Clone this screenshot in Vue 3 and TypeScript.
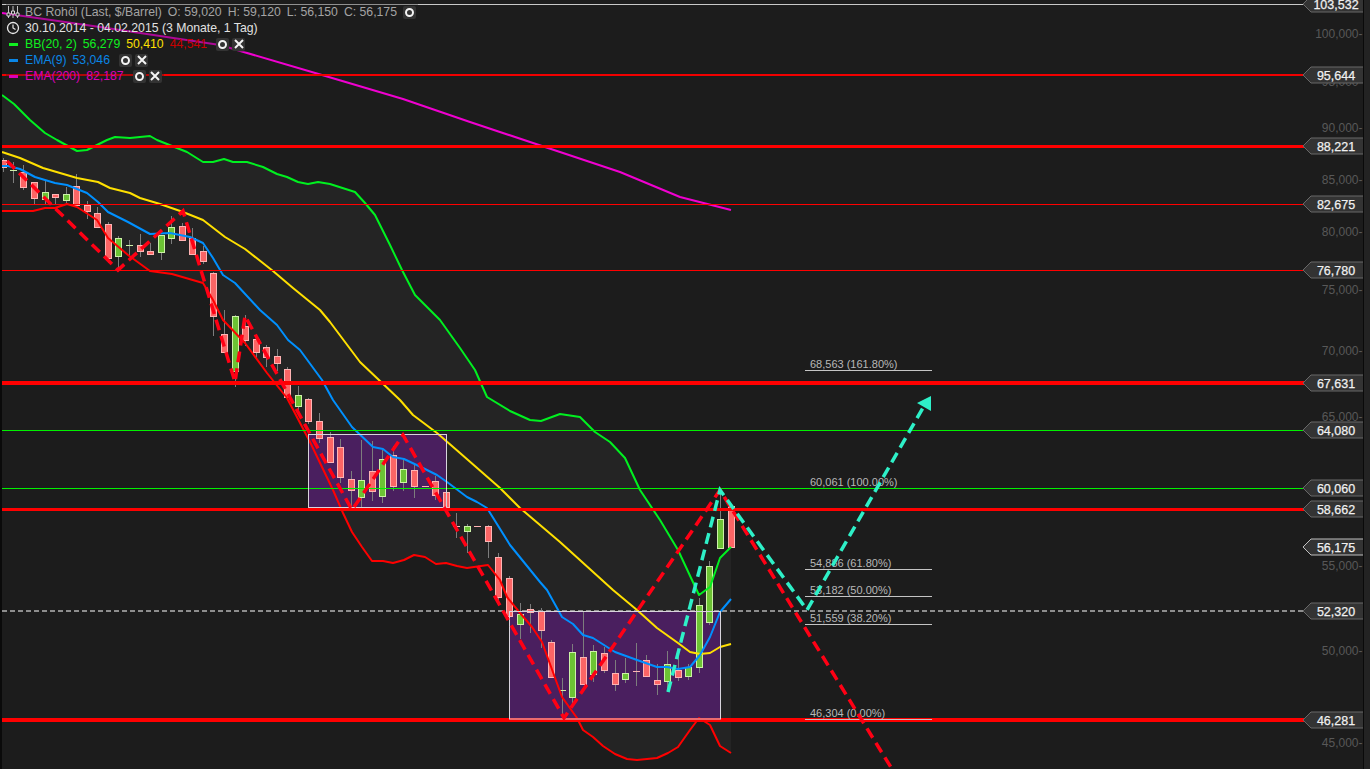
<script setup lang="ts">
// Chart canvas: every value below is in screen pixels of the 1370x769 view.
type Candle = [x: number, top: number, bottom: number, high: number, low: number, up: boolean];

const candles: Candle[] = [
  [3, 160, 168, 158, 172, false], [13, 170, 171, 162, 183, true], [23, 172, 188, 165, 190, false],
  [34, 182, 199, 182, 204, false], [45, 192, 200, 181, 205, true], [55, 194, 198, 194, 204, false],
  [66, 194, 201, 187, 203, true], [76, 186, 206, 174, 206, false], [87, 205, 212, 201, 219, false],
  [97, 213, 228, 207, 228, false], [108, 224, 259, 222, 263, false], [118, 238, 257, 236, 270, true],
  [129, 245, 246, 240, 255, true], [140, 245, 252, 234, 257, false], [150, 251, 255, 243, 255, false],
  [161, 235, 253, 235, 260, true], [171, 227, 239, 216, 244, true], [182, 226, 241, 223, 241, false],
  [192, 238, 255, 228, 255, false], [203, 251, 262, 246, 264, false], [213, 273, 317, 272, 336, false],
  [224, 334, 353, 310, 353, false], [235, 316, 372, 315, 387, true], [245, 326, 341, 315, 346, false],
  [256, 339, 353, 339, 358, false], [266, 347, 358, 345, 367, false], [277, 356, 364, 349, 371, false],
  [287, 369, 398, 367, 400, false], [298, 395, 407, 386, 410, true], [308, 399, 422, 398, 424, false],
  [319, 421, 439, 413, 443, false], [330, 437, 463, 432, 463, false], [340, 447, 478, 439, 483, false],
  [351, 479, 491, 471, 507, false], [361, 480, 498, 440, 507, true], [372, 471, 492, 441, 501, false],
  [382, 459, 497, 450, 503, true], [393, 455, 487, 446, 491, false], [403, 469, 483, 458, 491, true],
  [414, 470, 487, 465, 498, false], [425, 486, 487, 486, 487, false], [435, 481, 496, 476, 500, false],
  [446, 492, 508, 492, 510, false], [456, 526, 527, 513, 538, false], [467, 526, 532, 524, 553, true],
  [477, 526, 527, 526, 527, false], [488, 526, 542, 525, 558, false], [498, 557, 598, 553, 600, false],
  [509, 578, 617, 576, 618, false], [520, 614, 625, 603, 639, true], [530, 609, 613, 604, 633, false],
  [541, 611, 631, 608, 648, false], [551, 642, 678, 640, 678, false], [562, 690, 691, 678, 718, true],
  [572, 652, 698, 644, 708, true], [583, 657, 685, 612, 685, false], [593, 651, 675, 645, 682, true],
  [604, 653, 671, 647, 673, false], [615, 673, 685, 660, 691, false], [625, 673, 680, 658, 683, true],
  [636, 671, 672, 643, 686, false], [646, 660, 677, 655, 677, false], [657, 680, 685, 664, 695, false],
  [667, 664, 682, 651, 692, true], [678, 670, 678, 650, 681, false], [688, 667, 677, 664, 680, true],
  [699, 605, 668, 598, 673, true], [709, 566, 623, 561, 625, true], [720, 519, 549, 490, 549, true],
  [731, 506, 548, 504, 548, false],
];

const upper =
  '2,95 14,104 30,120 45,133 57,140 77,151 87,150 107,140 115,137 130,138 150,136 157,140 187,152 203,162 213,162 224,159 233,162 247,162 263,167 277,174 287,177 298,182 308,184 318,182 330,184 355,192 365,203 375,215 390,245 402,270 415,295 440,320 460,348 475,370 487,397 510,411 530,420 541,421 560,414 580,417 595,432 610,442 625,458 640,490 660,520 678,550 699,595 710,587 720,558 731,547';
const lower =
  '2,211 33,211 45,208 55,208 67,204 77,207 97,220 108,238 128,255 150,271 172,274 203,283 213,300 223,320 245,343 267,373 287,398 310,442 333,490 343,513 352,532 362,547 372,561 383,561 393,563 404,560 414,555 425,557 436,564 446,563 457,566 467,568 488,565 500,580 507,597 520,613 532,627 542,642 562,697 577,718 583,730 593,737 603,746 615,754 627,759 637,760 657,758 668,753 678,747 690,730 699,718 710,725 720,746 731,753';
const middle =
  '2,152 20,158 43,168 77,178 98,182 110,188 130,193 140,198 160,204 183,212 203,220 225,237 245,249 273,271 293,288 320,310 330,322 360,362 400,400 413,415 437,433 460,453 500,488 520,508 560,542 613,590 637,610 657,628 678,643 690,652 700,654 710,653 720,647 731,644';
const ema9 =
  '2,166 8,166 20,169 35,177 55,183 67,185 87,193 98,202 108,212 128,222 150,234 170,233 190,237 203,243 213,258 223,275 235,283 260,310 277,325 288,340 300,350 322,380 333,400 352,427 373,447 383,449 393,457 404,459 423,468 437,475 447,482 467,497 477,502 487,508 510,545 540,582 547,590 562,617 573,624 583,635 593,638 615,652 637,660 657,667 667,667 678,669 690,667 700,655 710,637 720,612 731,599';
const ema200 =
  '2,13 100,27 220,45 322,75 403,99 470,122 545,147 620,172 680,197 731,210';
const bandFill = `${upper} ${lower.split(' ').reverse().join(' ')}`;

const redDash = '7,161 118,270 183,211 235,382 245,316 352,510 403,435 564,718 720,490 892,769';
const tealDash = '668,692 720,490 807,610 924,406';

const levels = [
  { y: 75, h: 2, color: '#f00000' },
  { y: 146, h: 3, color: '#ff0000' },
  { y: 204, h: 1, color: '#ff0000' },
  { y: 270, h: 1, color: '#ff0000' },
  { y: 383, h: 4, color: '#ff0000' },
  { y: 430, h: 1, color: '#00f000' },
  { y: 488, h: 1, color: '#00f000' },
  { y: 509, h: 3, color: '#ff0000' },
  { y: 720, h: 4, color: '#ff0000' },
];

const boxes = [
  { x: 308.5, y: 434.5, w: 138, h: 73 },
  { x: 509.5, y: 611.5, w: 211, h: 107.5 },
];

const fibs = [
  { y: 370, text: '68,563 (161.80%)' },
  { y: 488, text: '60,061 (100.00%)', noLine: true },
  { y: 569, text: '54,886 (61.80%)' },
  { y: 596, text: '53,182 (50.00%)' },
  { y: 624, text: '51,559 (38.20%)' },
  { y: 719, text: '46,304 (0.00%)' },
];

const ticks = [
  { y: 34, text: '100,000' }, { y: 82, text: '95,000' }, { y: 128, text: '90,000' },
  { y: 180, text: '85,000' }, { y: 232, text: '80,000' }, { y: 290, text: '75,000' },
  { y: 351, text: '70,000' }, { y: 417, text: '65,000' }, { y: 566, text: '55,000' },
  { y: 651, text: '50,000' }, { y: 743, text: '45,000' },
];

const tags = [
  { y: 4, text: '103,532' }, { y: 75, text: '95,644' }, { y: 146, text: '88,221' },
  { y: 204, text: '82,675' }, { y: 270, text: '76,780' }, { y: 383, text: '67,631' },
  { y: 430, text: '64,080' }, { y: 488, text: '60,060' }, { y: 509, text: '58,662' },
  { y: 547, text: '56,175', last: true }, { y: 611, text: '52,320' }, { y: 720, text: '46,281' },
];

const months = [
  { x: 10, text: 'Nov' }, { x: 224, text: 'Dez' }, { x: 462, text: 'Jan \'15' }, { x: 702, text: 'Feb' },
];

const indicators = [
  { cls: 'row-bb', name: 'BB(20, 2)', values: [{ v: '56,279' }, { v: '50,410', cls: 'mid' }, { v: '44,541', cls: 'low' }] },
  { cls: 'row-ema9', name: 'EMA(9)', values: [{ v: '53,046' }] },
  { cls: 'row-ema200', name: 'EMA(200)', values: [{ v: '82,187' }] },
];

function tagShape(y: number): string {
  return `1303,${y} 1311,${y - 8} 1364,${y - 8} 1364,${y + 8} 1311,${y + 8}`;
}
</script>

<template>
  <div class="terminal">
    <svg class="chart" viewBox="0 0 1370 769" width="1370" height="769">
      <polygon :points="bandFill" fill="#242424" />
      <rect x="2" y="4" width="1302" height="1" fill="#c8c8c8" />
      <line class="last-line" x1="2" y1="611" x2="1304" y2="611" />

      <!-- boxes -->
      <rect v-for="b in boxes" :key="b.x" class="box" :x="b.x" :y="b.y" :width="b.w" :height="b.h" />

      <!-- candles -->
      <g v-for="c in candles" :key="c[0]" shape-rendering="crispEdges">
        <rect :x="c[0]" :y="c[3]" width="1" :height="c[4] - c[3]" fill="#7d7d7d" />
        <rect
          v-if="c[2] - c[1] < 2"
          :x="c[0] - 3"
          :y="c[1]"
          width="7"
          height="1"
          :fill="c[5] ? '#cdf2a8' : '#ffb4b4'"
        />
        <rect
          v-else
          :x="c[0] - 2.5"
          :y="c[1] + 0.5"
          width="6"
          :height="c[2] - c[1] - 1"
          :fill="c[5] ? '#6cc334' : '#fb6565'"
          :stroke="c[5] ? '#cdf2a8' : '#ffb4b4'"
          stroke-width="1"
        />
      </g>

      <!-- Bollinger + EMA -->
      <polyline class="curve" :points="upper" stroke="#00f020" />
      <polyline class="curve" :points="lower" stroke="#ff0000" />
      <polyline class="curve" :points="middle" stroke="#ffe000" />
      <polyline class="curve" :points="ema9" stroke="#0090ff" />
      <polyline class="curve" :points="ema200" stroke="#f000d0" />

      <!-- horizontal levels -->
      <rect
        v-for="l in levels"
        :key="l.y"
        x="2"
        :y="l.y - Math.floor(l.h / 2)"
        width="1302"
        :height="l.h"
        :fill="l.color"
      />
      <rect v-for="b in boxes" :key="b.x" class="box-edge" :x="b.x" :y="b.y" :width="b.w" :height="b.h" />

      <!-- fibonacci -->
      <g v-for="f in fibs" :key="f.y">
        <rect v-if="!f.noLine" x="805" :y="f.y" width="127" height="1" fill="#c4c4c4" />
        <text class="fib" x="810" :y="f.y - 2">{{ f.text }}</text>
      </g>

      <!-- drawings -->
      <polyline class="dash" :points="redDash" stroke="#ff0014" />
      <polyline class="dash" :points="tealDash" stroke="#2ef0c8" />
      <polygon points="917,403 931,396 931,411" fill="#2ef0c8" />

      <!-- price axis -->
      <text v-for="t in ticks" :key="t.y" class="tick" x="1362.500" :y="t.y + 4">{{ t.text }}-</text>
      <g v-for="t in tags" :key="t.text">
        <polygon
          :points="tagShape(t.y)"
          fill="#333333"
          :stroke="t.last ? '#c0c0c0' : '#686868'"
          stroke-width="1"
        />
        <text class="tag" x="1336" :y="t.y + 4.5">{{ t.text }}</text>
      </g>

      <!-- time axis -->
      <text v-for="m in months" :key="m.x" class="month" :x="m.x" y="778">{{ m.text }}</text>
    </svg>

    <div class="edge-left"></div>
    <div class="edge-right"></div>

    <div class="legend">
      <div class="row row-title">
        <svg class="ico" viewBox="0 0 14 14" width="14" height="14">
          <path d="M2.500 1v12M7 1v12M11.500 1v12" stroke="#c4c4c4" stroke-width="1" fill="none" />
          <path d="M1 8h3v3H1zM5.500 6h3v3h-3zM10 8h3v3h-3z" fill="#1c1c1c" stroke="#d8d8d8" stroke-width="1" />
        </svg>
        <span>BC Rohöl (Last, $/Barrel)</span>
        <span class="ohlc">O: 59,020</span>
        <span class="ohlc">H: 59,120</span>
        <span class="ohlc">L: 56,150</span>
        <span class="ohlc">C: 56,175</span>
        <span class="btn"><i class="dot"></i></span>
      </div>
      <div class="row row-range">
        <svg class="ico" viewBox="0 0 14 14" width="14" height="14">
          <circle cx="7" cy="7" r="5.500" fill="none" stroke="#e8e8e8" stroke-width="1.300" />
          <path d="M7 3.500V7l2.500 1.500" fill="none" stroke="#e8e8e8" stroke-width="1.200" />
        </svg>
        <span>30.10.2014 - 04.02.2015 (3 Monate, 1 Tag)</span>
      </div>
      <div v-for="ind in indicators" :key="ind.name" class="row" :class="ind.cls">
        <i class="swatch"></i>
        <span>{{ ind.name }}</span>
        <span v-for="val in ind.values" :key="val.v" class="gap" :class="val.cls">{{ val.v }}</span>
        <span class="btn first"><i class="dot"></i></span>
        <span class="btn close">
          <svg viewBox="0 0 10 10" width="10" height="10">
            <path d="M1 1l8 8M9 1l-8 8" stroke="#f4f4f4" stroke-width="2" fill="none" />
          </svg>
        </span>
      </div>
    </div>
  </div>
</template>

<style scoped>
.terminal {
  position: relative;
  width: 1370px;
  height: 769px;
  overflow: hidden;
  background: #1c1c1c;
  font-family: "Liberation Sans", Arial, sans-serif;
}
.chart {
  display: block;
}
.chart text {
  font-family: "Liberation Sans", Arial, sans-serif;
}
.edge-left {
  position: absolute;
  left: 0;
  top: 0;
  bottom: 0;
  width: 2px;
  background: #0a0a0a;
}
.edge-right {
  position: absolute;
  right: 0;
  top: 0;
  bottom: 0;
  width: 6px;
  background: #232323;
  border-left: 1px solid #0a0a0a;
}
.box {
  fill: #4a1f5f;
}
.box-edge {
  fill: none;
  stroke: #d8d4dc;
  stroke-width: 1;
}
.curve {
  fill: none;
  stroke-width: 2;
  stroke-linejoin: round;
}
.dash {
  fill: none;
  stroke-width: 3.500;
  stroke-dasharray: 11 6;
}
.last-line {
  stroke: #ffffff;
  stroke-width: 1;
  stroke-dasharray: 5 3;
}
.fib {
  font-size: 11px;
  fill: #b8b8b8;
}
.tick {
  font-size: 12px;
  fill: #585858;
  text-anchor: end;
}
.tag {
  font-size: 12.500px;
  fill: #f0f0f0;
  stroke: #f0f0f0;
  stroke-width: 0.250px;
  text-anchor: middle;
}
.month {
  font-size: 12px;
  fill: #8a8a8a;
}

.legend {
  position: absolute;
  left: 6px;
  top: 4px;
  display: flex;
  flex-direction: column;
  align-items: flex-start;
  font-size: 12.250px;
  line-height: 16px;
}
.row {
  display: flex;
  align-items: center;
  height: 16px;
  padding-right: 2px;
  background: rgba(28, 28, 28, 0.32);
  white-space: nowrap;
}
.ico {
  margin-right: 5px;
  flex: none;
}
.row-title {
  color: #a4a4a4;
}
.ohlc {
  margin-left: 6px;
}
.row-range {
  color: #e2e2e2;
}
.swatch {
  width: 9px;
  height: 3px;
  margin: 0 7px 0 3px;
  background: currentColor;
  flex: none;
}
.gap {
  margin-left: 6px;
}
.row-bb {
  color: #10f020;
}
.mid {
  color: #ffe000;
}
.low {
  color: #c80000;
}
.row-ema9 {
  color: #0a86e6;
}
.row-ema200 {
  color: #dc00b8;
}
.btn {
  width: 13px;
  height: 13px;
  display: flex;
  align-items: center;
  justify-content: center;
  background: #333;
  border-radius: 2px;
  flex: none;
}
.first {
  margin-left: 9px;
}
.close {
  margin-left: 3px;
}
.row-title .btn {
  margin-left: 6px;
}
.dot {
  width: 9px;
  height: 9px;
  box-sizing: border-box;
  border: 2.500px solid #f4f4f4;
  border-radius: 50%;
}
</style>
